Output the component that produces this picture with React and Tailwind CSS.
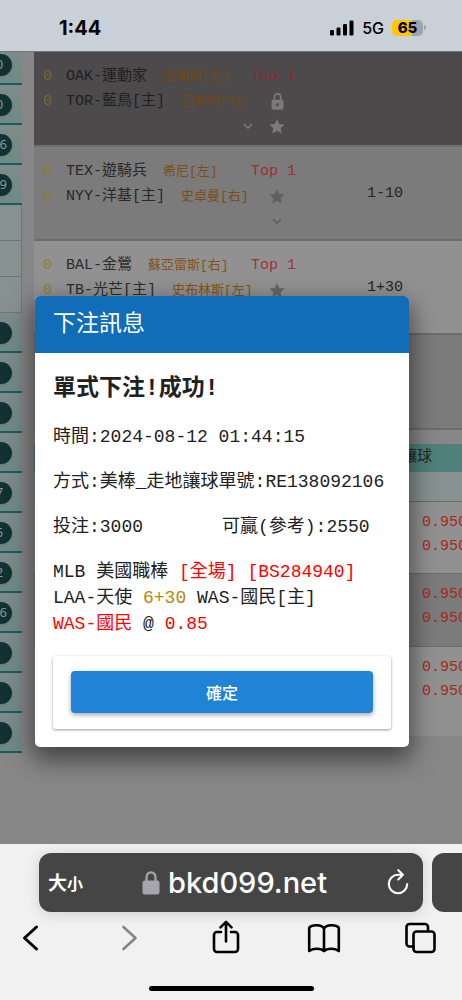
import React from "react";

const MONO = "font-['Liberation_Mono','Noto_Sans_CJK_TC',monospace]";

const games = [
  {
    away: "OAK-運動家", awayPitcher: "西爾斯[左]",
    home: "TOR-藍鳥[主]", homePitcher: "巴希特[右]",
    locked: true, score: "",
    row: "bg-[#4c4a4b] border-[#707070]", num: "text-[#776830]", team: "text-[#202020]",
    pitcher: "text-[#704817]", inning: "text-[#8a2c32]", icon: "text-[#7a7a7a]",
  },
  {
    away: "TEX-遊騎兵", awayPitcher: "希尼[左]",
    home: "NYY-洋基[主]", homePitcher: "史卓曼[右]",
    score: "1-10",
    row: "bg-[#7b7b7b] border-[#6c6c6c]", num: "text-[#8c7a33]", team: "text-[#282828]",
    pitcher: "text-[#7c4e14]", inning: "text-[#9c2f37]", icon: "text-[#5f5f5f]",
  },
  {
    away: "BAL-金鶯", awayPitcher: "蘇亞雷斯[右]",
    home: "TB-光芒[主]", homePitcher: "史布林斯[左]",
    score: "1+30",
    row: "bg-[#919191] border-[#6c6c6c]", num: "text-[#93802f]", team: "text-[#2b2b2b]",
    pitcher: "text-[#845315]", inning: "text-[#a1303a]", icon: "text-[#666666]",
  },
];

const odds = [
  { id: "a", row: "bg-[#919191] h-[72px]" },
  { id: "b", row: "bg-[#7b7b7b] h-[73px]" },
  { id: "c", row: "bg-[#919191] h-[90px]" },
];

const sideTop = ["0", "0", "16", "19"];
const sideBottom = ["", "", "", "", "7", "5", "2", "16", "", "", ""];

function Lock({ className, solid }) {
  return (
    <svg viewBox="0 0 18 24" className={className} fill="none" aria-hidden="true">
      <path d="M4.500 11V6.400C4.500 3.500 6.300 1.300 9 1.300s4.500 2.200 4.500 5.100V11" stroke="currentColor" strokeWidth="2.300" />
      <rect x="0.500" y="9.500" width="17" height="14" rx="2.500" fill="currentColor" />
      {!solid && <circle cx="9" cy="16.500" r="2.100" fill="#4c4a4b" />}
    </svg>
  );
}

function Star() {
  return (
    <svg viewBox="0 0 24 24" className="size-4" fill="currentColor" aria-hidden="true">
      <path d="M12 0l3.400 7.400 8.100.900-6 5.500 1.700 8L12 17.700 4.800 21.800l1.700-8-6-5.500 8.100-.900z" />
    </svg>
  );
}

function ChevronDown() {
  return (
    <svg viewBox="0 0 16 16" className="size-4" fill="none" stroke="currentColor" strokeWidth="1.600" aria-hidden="true">
      <path d="M4 5l4 4 4-4" />
    </svg>
  );
}

function StatusBar() {
  return (
    <header className="flex h-[51px] shrink-0 items-center justify-between bg-[#c9d0d8] pt-1 pr-9 pl-[59px] font-['Inter',sans-serif] text-black">
      <time className="text-[20px] leading-6 font-bold">1:44</time>
      <div className="flex items-center gap-2">
        <svg viewBox="0 0 24 16" className="h-4 w-6" aria-hidden="true">
          <rect x="0" y="10" width="4" height="5.500" rx="1.200" />
          <rect x="6.500" y="7.500" width="4" height="8" rx="1.200" />
          <rect x="13" y="4" width="4" height="11.500" rx="1.200" />
          <rect x="19.500" y="0.500" width="4" height="15" rx="1.200" />
        </svg>
        <span className="text-[16px] leading-5 font-medium">5G</span>
        <span className="flex items-center gap-px">
          <span className="flex h-4 w-[31px] items-center justify-center rounded-[5px] bg-linear-to-r from-[#fdc800] from-65% to-[#9ea4ab] to-65% text-[15px] leading-4 font-extrabold">
            65
          </span>
          <span className="h-[5px] w-[2px] rounded-r bg-[#9ea4ab]" />
        </span>
      </div>
    </header>
  );
}

function SideItem({ label }) {
  return (
    <li className="flex h-[40px] items-center border-b-2 border-[#1a5c5e] bg-linear-to-b from-[#7e8b8a] to-[#6f8a86] pt-0.5">
      <span className="-ml-[13px] flex h-[22px] w-[25px] shrink-0 items-center justify-center rounded-full bg-[#113233] text-[13px] text-[#8b9696] shadow">
        {label}
      </span>
    </li>
  );
}

function Sidebar() {
  return (
    <nav className="w-[22px] shrink-0 overflow-hidden font-['Noto_Sans',sans-serif]">
      <ul className="-mt-[7px]">
        {sideTop.map((n, i) => <SideItem key={i} label={n} />)}
        {[0, 1, 2].map((i) => (
          <li key={i} className="h-[36px] border-r border-b border-[#6f7676] bg-[#87918f]" />
        ))}
        {sideBottom.map((n, i) => <SideItem key={i} label={n} />)}
      </ul>
    </nav>
  );
}

function Game({ g }) {
  return (
    <tr className={`h-[94px] border-b-2 ${g.row}`}>
      <td className="w-[299px] pt-3 pb-[5px] pl-[9px] align-top">
        <div className="grid grid-cols-[23px_185px_52px] auto-rows-[25px] items-center whitespace-nowrap">
          <span className={g.num}>0</span>
          <span className="flex items-center gap-4">
            <span className={g.team}>{g.away}</span>
            <span className={`text-[13px] ${g.pitcher}`}>{g.awayPitcher}</span>
          </span>
          <span className={g.inning}>Top 1</span>
          <span className={g.num}>0</span>
          <span className="flex items-center gap-4">
            <span className={g.team}>{g.home}</span>
            <span className={`text-[13px] ${g.pitcher}`}>{g.homePitcher}</span>
          </span>
          <span className={`flex justify-center ${g.icon}`}>
            {g.locked ? <Lock className="h-[17px] w-[13px]" /> : <Star />}
          </span>
          <span className={`col-span-3 flex items-center justify-end gap-[13px] pr-[18px] ${g.icon}`}>
            <ChevronDown />
            {g.locked && <Star />}
          </span>
        </div>
      </td>
      <td className="pl-[34px] text-[#242424]">{g.score}</td>
    </tr>
  );
}

function Board() {
  return (
    <div className={`min-w-0 flex-1 overflow-hidden text-[15px] leading-[25px] ${MONO}`}>
      <table className="w-full border-collapse">
        <tbody>
          {games.map((g) => <Game key={g.away} g={g} />)}
          <tr className="h-[95px] border-b-2 border-[#6c6c6c] bg-[#7b7b7b]">
            <td colSpan={2} />
          </tr>
        </tbody>
      </table>
      <table className="mt-[14px] w-full table-fixed border-collapse leading-[24px]">
        <thead>
          <tr className="h-[28px] bg-[#4f8079] text-left text-[#202727]">
            <td className="w-[352px]" />
            <th className="pl-4 font-normal whitespace-nowrap">讓球</th>
          </tr>
        </thead>
        <tbody>
          <tr className="h-[29px] border-b border-[#6c6c6c] bg-[#87918f]">
            <td colSpan={2} />
          </tr>
          {odds.map((o) => (
            <tr key={o.id} className={`border-b border-[#6c6c6c] last:border-0 ${o.row}`}>
              <td />
              <td className="pt-[9px] pl-9 align-top text-[#a12b20]">
                <div>0.950</div>
                <div>0.950</div>
              </td>
            </tr>
          ))}
        </tbody>
      </table>
    </div>
  );
}

function BetDialog() {
  return (
    <section
      role="dialog"
      aria-labelledby="bet-title"
      className={`absolute inset-x-0 top-[244px] mr-[53px] ml-[35px] overflow-hidden rounded-[5px] bg-white text-[18px] leading-[26px] whitespace-nowrap text-[#212121] shadow-[0_10px_24px_3px_rgba(0,0,0,0.5)] ${MONO}`}
    >
      <h2 id="bet-title" className="flex h-[57px] items-center bg-[#116db7] px-[18px] text-[23px] text-white">
        下注訊息
      </h2>
      <div className="flex flex-col gap-[19px] px-[18px] pt-5 pb-[18px]">
        <h3 className="text-[23px] leading-8 font-bold">單式下注!成功!</h3>
        <p>時間:2024-08-12 01:44:15</p>
        <p>方式:美棒_走地讓球單號:RE138092106</p>
        <p className="grid grid-cols-2">
          <span>投注:3000</span>
          <span>可贏(參考):2550</span>
        </p>
        <p>
          MLB 美國職棒 <span className="text-[#ff0000]">[全場] [BS284940]</span>
          <br />
          LAA-天使 <span className="text-[#b8860b]">6+30</span> WAS-國民[主]
          <br />
          <span className="text-[#ff0000]">WAS-國民</span> @ <span className="text-[#ff0000]">0.85</span>
        </p>
        <div className="rounded-[3px] px-[18px] pt-[15px] pb-4 shadow-[0_1px_3px_rgba(0,0,0,0.4)]">
          <button type="button" className="block h-[42px] w-full rounded bg-[#2083d5] text-[16px] font-medium text-white shadow-[0_2px_5px_rgba(0,0,0,0.35)] font-['Noto_Sans_CJK_TC',sans-serif]">
            確定
          </button>
        </div>
      </div>
    </section>
  );
}

function ToolIcon({ label, className, children }) {
  return (
    <button type="button" aria-label={label} className={className}>
      <svg viewBox="0 0 34 36" className="h-9 w-[34px]" fill="none" stroke="currentColor" strokeWidth="2.600" strokeLinecap="round" strokeLinejoin="round" aria-hidden="true">
        {children}
      </svg>
    </button>
  );
}

function BrowserBar() {
  return (
    <footer className="relative flex h-[156px] shrink-0 flex-col overflow-hidden bg-[#f1f1f2] pt-[9px]">
      <div className="flex h-[59px] gap-[9px] pl-[39px]">
        <div className="flex flex-1 items-center justify-between rounded-xl bg-[#454545] pr-[13px] pl-[9px] text-white shadow-[0_2px_14px_rgba(0,0,0,0.14)]">
          <button type="button" className="flex items-baseline font-['Noto_Sans_CJK_TC',sans-serif] leading-6 font-bold">
            <span className="text-[19px]">大</span>
            <span className="text-[16px]">小</span>
          </button>
          <a href="#top" className="flex items-center gap-2 font-['Inter',sans-serif] text-[29px] leading-8 font-medium">
            <Lock solid className="h-6 w-[18px] text-[#a6a5ae]" />
            bkd099.net
          </a>
          <button type="button" aria-label="重新載入">
            <svg viewBox="0 0 24 28" className="h-7 w-6" fill="none" stroke="currentColor" strokeWidth="2.100" strokeLinecap="round" strokeLinejoin="round" aria-hidden="true">
              <path d="M15.500 5.800H12A9.200 9.200 0 1 0 21.200 15" />
              <path d="M12.300 1.200l4.600 4.600-4.600 4.600" />
            </svg>
          </button>
        </div>
        <div className="w-[30px] shrink-0 rounded-l-xl bg-[#454545]" />
      </div>
      <div className="flex items-center justify-between pt-2 pr-6 pl-[14px] text-black">
        <ToolIcon label="返回" className="text-black">
          <path strokeWidth="3" d="M22.500 7L10.500 18l12 11" />
        </ToolIcon>
        <ToolIcon label="前進" className="text-[#858585]">
          <path d="M11.500 7l12 11-12 11" />
        </ToolIcon>
        <ToolIcon label="分享">
          <path d="M12 12H8a3 3 0 0 0-3 3v14a3 3 0 0 0 3 3h18a3 3 0 0 0 3-3V15a3 3 0 0 0-3-3h-4" />
          <path d="M17 21.500V2M11.500 7.300L17 1.800l5.500 5.500" />
        </ToolIcon>
        <ToolIcon label="書籤">
          <path d="M17 8.500C14.500 4.500 5.500 4.200 2.200 7.600V31c3.500-3 12-3 14.800 0 2.800-3 11.300-3 14.800 0V7.600C28.500 4.200 19.500 4.500 17 8.500zM17 8.500V31" />
        </ToolIcon>
        <ToolIcon label="分頁">
          <path d="M9.500 26.500H5.500a3 3 0 0 1-3-3V7a3 3 0 0 1 3-3H21a3 3 0 0 1 3 3v3.500" />
          <rect x="9.500" y="11.500" width="21" height="20.500" rx="3" />
        </ToolIcon>
      </div>
      <div className="mx-auto mt-[30px] h-[5px] w-[165px] rounded-full bg-black" />
    </footer>
  );
}

export default function App() {
  return (
    <div id="top" className="flex min-h-screen flex-col overflow-hidden bg-[#878787]">
      <StatusBar />
      <main className="relative flex flex-1 items-start gap-3 border-t border-[#777777] bg-[#878787]">
        <Sidebar />
        <Board />
        <BetDialog />
      </main>
      <BrowserBar />
    </div>
  );
}
